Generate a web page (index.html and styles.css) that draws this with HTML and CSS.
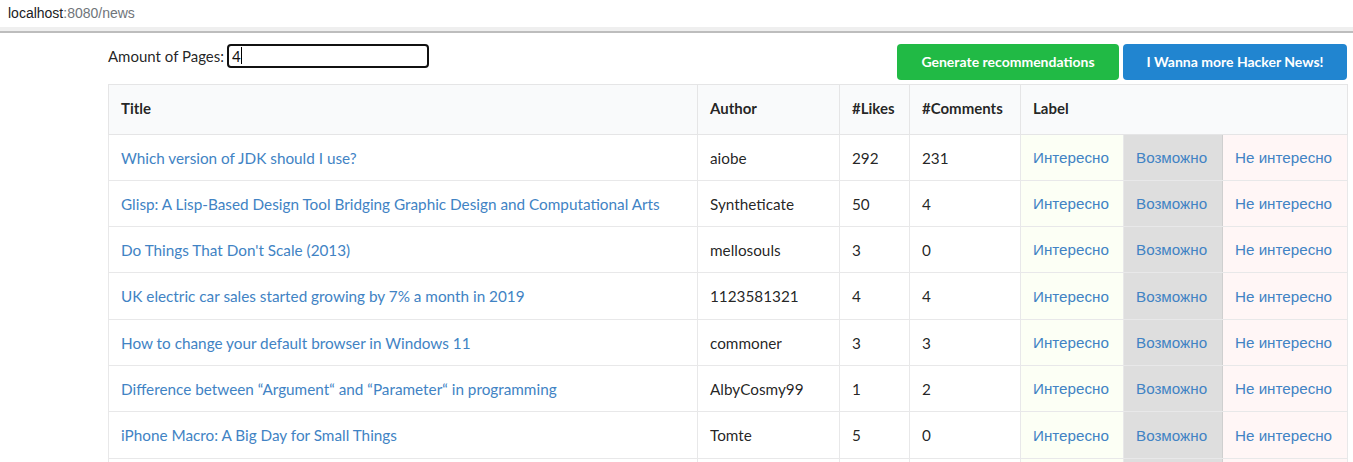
FILE: index.html
```html
<!DOCTYPE html>
<html>
<head>
<meta charset="utf-8">
<link rel="stylesheet" href="styles.css">
</head>
<body>
<div class="addr">
  <span class="host">localhost</span><span class="path">:8080/news</span>
</div>
<div class="chrome-sep"></div>
<main class="page">
  <div class="toolbar">
    <label class="pages">Amount of Pages: <input class="pages-input" type="text" value="4"><span class="caret"></span></label>
    <div class="actions">
      <button class="btn green">Generate recommendations</button>
      <button class="btn blue">I Wanna more Hacker News!</button>
    </div>
  </div>
  <table class="news">
    <colgroup>
      <col class="c-title"><col class="c-author"><col class="c-likes"><col class="c-comments"><col class="c-pos"><col class="c-mid"><col class="c-neg">
    </colgroup>
    <thead>
      <tr><th>Title</th><th>Author</th><th>#Likes</th><th>#Comments</th><th colspan="3">Label</th></tr>
    </thead>
    <tbody>
      <tr><td><a>Which version of JDK should I use?</a></td><td>aiobe</td><td>292</td><td>231</td><td class="pos"><a>Интересно</a></td><td class="mid"><a>Возможно</a></td><td class="neg"><a>Не интересно</a></td></tr>
      <tr><td><a>Glisp: A Lisp-Based Design Tool Bridging Graphic Design and Computational Arts</a></td><td>Syntheticate</td><td>50</td><td>4</td><td class="pos"><a>Интересно</a></td><td class="mid"><a>Возможно</a></td><td class="neg"><a>Не интересно</a></td></tr>
      <tr><td><a>Do Things That Don't Scale (2013)</a></td><td>mellosouls</td><td>3</td><td>0</td><td class="pos"><a>Интересно</a></td><td class="mid"><a>Возможно</a></td><td class="neg"><a>Не интересно</a></td></tr>
      <tr><td><a>UK electric car sales started growing by 7% a month in 2019</a></td><td>1123581321</td><td>4</td><td>4</td><td class="pos"><a>Интересно</a></td><td class="mid"><a>Возможно</a></td><td class="neg"><a>Не интересно</a></td></tr>
      <tr><td><a>How to change your default browser in Windows 11</a></td><td>commoner</td><td>3</td><td>3</td><td class="pos"><a>Интересно</a></td><td class="mid"><a>Возможно</a></td><td class="neg"><a>Не интересно</a></td></tr>
      <tr><td><a>Difference between “Argument“ and “Parameter“ in programming</a></td><td>AlbyCosmy99</td><td>1</td><td>2</td><td class="pos"><a>Интересно</a></td><td class="mid"><a>Возможно</a></td><td class="neg"><a>Не интересно</a></td></tr>
      <tr><td><a>iPhone Macro: A Big Day for Small Things</a></td><td>Tomte</td><td>5</td><td>0</td><td class="pos"><a>Интересно</a></td><td class="mid"><a>Возможно</a></td><td class="neg"><a>Не интересно</a></td></tr>
      <tr class="more"><td></td><td></td><td></td><td></td><td class="pos"></td><td class="mid"></td><td class="neg"></td></tr>
    </tbody>
  </table>
</main>
</body>
</html>
```

FILE: styles.css
```css
html, body {
  margin: 0;
  padding: 0;
  background: #fff;
}
body {
  font-family: Lato, "Liberation Sans", Arial, sans-serif;
  font-size: 14px;
  color: rgba(0, 0, 0, 0.87);
  overflow: hidden;
}
.addr {
  height: 27px;
  box-sizing: border-box;
  padding: 5px 0 0 8px;
  font-family: "Liberation Sans", Arial, sans-serif;
  font-size: 14px;
  line-height: 16px;
}
.host { color: #202124; }
.path { color: #70757a; }
.chrome-sep {
  height: 4px;
  background: #efefef;
  border-bottom: 2px solid #bdbdbd;
}
.page {
  padding: 0 6px 0 108px;
}
.toolbar {
  display: flex;
  justify-content: space-between;
  align-items: flex-start;
  padding-top: 11px;
  height: 40px;
}
.pages {
  display: flex;
  align-items: center;
  font-size: 15px;
  line-height: 24px;
  position: relative;
}
.pages-input {
  margin-left: 3px;
  width: 202px;
  height: 24px;
  box-sizing: border-box;
  border: 2px solid #111;
  border-radius: 4px;
  padding: 0 3px;
  font-family: Lato, "Liberation Sans", sans-serif;
  font-size: 15px;
  color: #111;
  outline: none;
}
.caret {
  position: absolute;
  left: 133px;
  top: 3px;
  width: 1px;
  height: 17px;
  background: #000;
}
.actions {
  display: flex;
  gap: 4px;
}
.btn {
  font-family: Lato, "Liberation Sans", sans-serif;
  font-weight: 700;
  font-size: 14px;
  line-height: 14px;
  height: 36px;
  padding: 0 21px;
  border: 0;
  border-radius: 4px;
  color: #fff;
}
.btn.green { background: #21ba45; width: 222px; }
.btn.blue { background: #2185d0; width: 224px; }

.news {
  width: 1239px;
  border-collapse: collapse;
  table-layout: fixed;
  border: 1px solid #dededf;
  font-size: 15.3px;
}
.c-title { width: 589px; }
.c-author { width: 142px; }
.c-likes { width: 70px; }
.c-comments { width: 111px; }
.c-pos { width: 103px; }
.c-mid { width: 99px; }
.c-neg { width: 125px; }
.news th {
  background: #f9fafb;
  text-align: left;
  font-weight: 700;
  font-size: 15px;
  height: 50px;
  padding: 0 12px 3px;
  box-sizing: border-box;
  border: 1px solid #e5e5e6;
  color: rgba(0, 0, 0, 0.87);
}
.news td {
  height: 46px;
  padding: 0 12px;
  box-sizing: border-box;
  border: 1px solid #e8e8e9;
  white-space: nowrap;
  overflow: hidden;
}
.news tbody tr:nth-child(4) td,
.news tbody tr:nth-child(7) td { height: 47px; }
.news a { color: #4183c4; }
.news td.pos, .news td.mid, .news td.neg {
  font-family: "Liberation Sans", Arial, sans-serif;
  font-size: 15.2px;
}
.news td.pos { background: #fcfff5; }
.news td.mid { background: #dedede; border-left-color: #cfcfcf; border-right-color: #cfcfcf; }
.news td.neg { background: #fff6f6; }
```
